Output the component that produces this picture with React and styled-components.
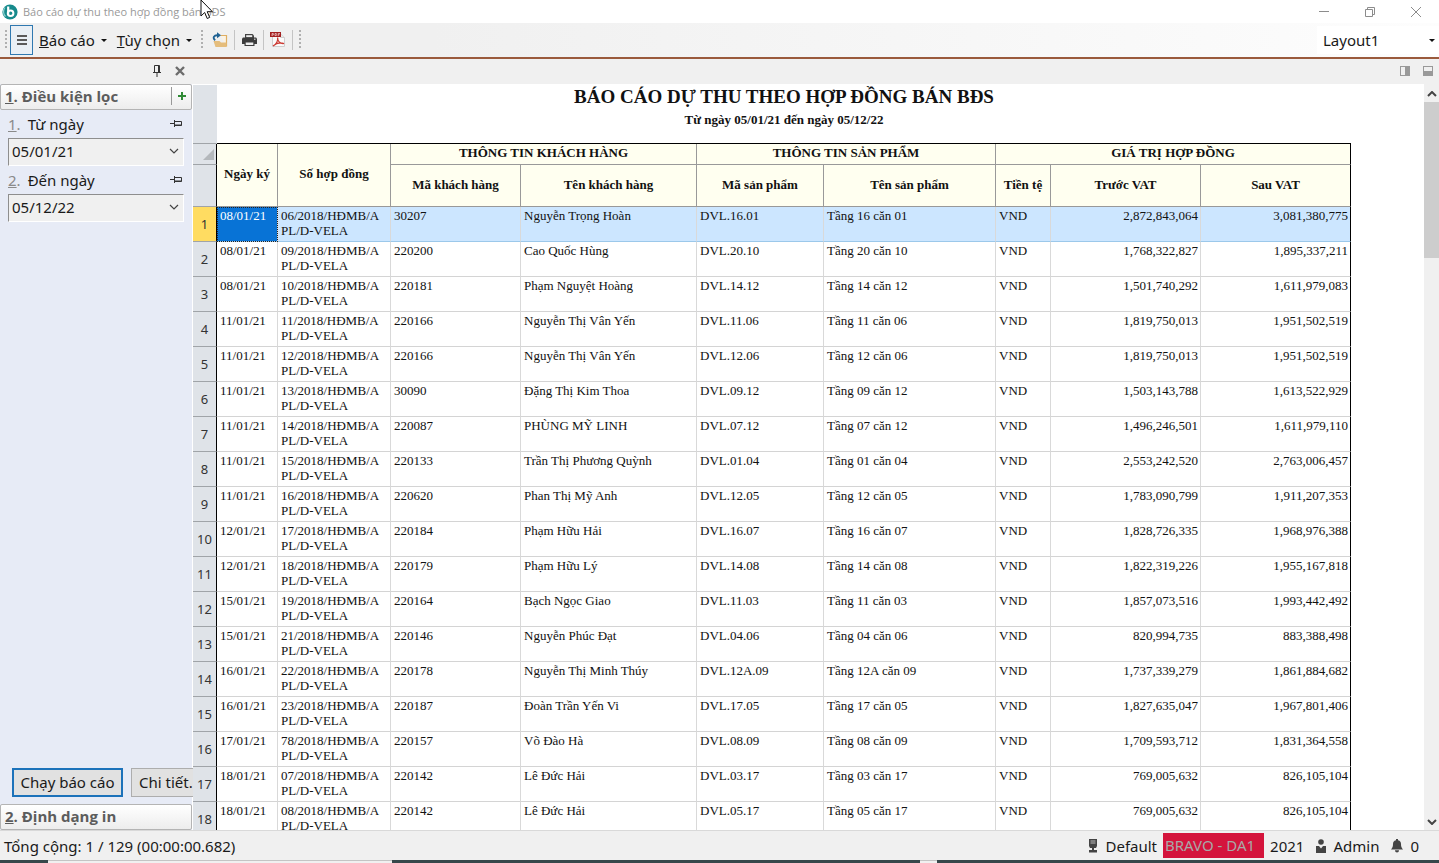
import React, { useState } from 'react';
import styled, { createGlobalStyle } from 'styled-components';

const rows = [
  ['08/01/21', '06', '30207', 'Nguyễn Trọng Hoàn', 'DVL.16.01', 'Tầng 16 căn 01', '2,872,843,064', '3,081,380,775'],
  ['08/01/21', '09', '220200', 'Cao Quốc Hùng', 'DVL.20.10', 'Tầng 20 căn 10', '1,768,322,827', '1,895,337,211'],
  ['08/01/21', '10', '220181', 'Phạm Nguyệt Hoàng', 'DVL.14.12', 'Tầng 14 căn 12', '1,501,740,292', '1,611,979,083'],
  ['11/01/21', '11', '220166', 'Nguyễn Thị Vân Yến', 'DVL.11.06', 'Tầng 11 căn 06', '1,819,750,013', '1,951,502,519'],
  ['11/01/21', '12', '220166', 'Nguyễn Thị Vân Yến', 'DVL.12.06', 'Tầng 12 căn 06', '1,819,750,013', '1,951,502,519'],
  ['11/01/21', '13', '30090', 'Đặng Thị Kim Thoa', 'DVL.09.12', 'Tầng 09 căn 12', '1,503,143,788', '1,613,522,929'],
  ['11/01/21', '14', '220087', 'PHÙNG MỸ LINH', 'DVL.07.12', 'Tầng 07 căn 12', '1,496,246,501', '1,611,979,110'],
  ['11/01/21', '15', '220133', 'Trần Thị Phương Quỳnh', 'DVL.01.04', 'Tầng 01 căn 04', '2,553,242,520', '2,763,006,457'],
  ['11/01/21', '16', '220620', 'Phan Thị Mỹ Anh', 'DVL.12.05', 'Tầng 12 căn 05', '1,783,090,799', '1,911,207,353'],
  ['12/01/21', '17', '220184', 'Phạm Hữu Hải', 'DVL.16.07', 'Tầng 16 căn 07', '1,828,726,335', '1,968,976,388'],
  ['12/01/21', '18', '220179', 'Phạm Hữu Lý', 'DVL.14.08', 'Tầng 14 căn 08', '1,822,319,226', '1,955,167,818'],
  ['15/01/21', '19', '220164', 'Bạch Ngọc Giao', 'DVL.11.03', 'Tầng 11 căn 03', '1,857,073,516', '1,993,442,492'],
  ['15/01/21', '21', '220146', 'Nguyễn Phúc Đạt', 'DVL.04.06', 'Tầng 04 căn 06', '820,994,735', '883,388,498'],
  ['16/01/21', '22', '220178', 'Nguyễn Thị Minh Thúy', 'DVL.12A.09', 'Tầng 12A căn 09', '1,737,339,279', '1,861,884,682'],
  ['16/01/21', '23', '220187', 'Đoàn Trần Yến Vi', 'DVL.17.05', 'Tầng 17 căn 05', '1,827,635,047', '1,967,801,406'],
  ['17/01/21', '78', '220157', 'Võ Đào Hà', 'DVL.08.09', 'Tầng 08 căn 09', '1,709,593,712', '1,831,364,558'],
  ['18/01/21', '07', '220142', 'Lê Đức Hải', 'DVL.03.17', 'Tầng 03 căn 17', '769,005,632', '826,105,104'],
  ['18/01/21', '08', '220142', 'Lê Đức Hải', 'DVL.05.17', 'Tầng 05 căn 17', '769,005,632', '826,105,104'],
];

const columnWidths = [24, 61, 113, 130, 176, 127, 172, 55, 150, 150];

function LogoIcon() {
  return (
    <svg width="16" height="16" viewBox="0 0 16 16">
      <circle cx="8" cy="8" r="7.6" fill="#168a8c" />
      <path d="M3 3.5C1 6 1 10 3.5 12.500" stroke="#8fd0cf" strokeWidth="1.2" fill="none" />
      <path d="M6.2 2.5v7.200" stroke="#fff" strokeWidth="2.2" fill="none" />
      <circle cx="8.6" cy="9.2" r="2.8" stroke="#fff" strokeWidth="2" fill="none" />
    </svg>
  );
}

function MinimizeIcon() {
  return (
    <svg width="12" height="12" viewBox="0 0 12 12" stroke="#8c8c8c" fill="none">
      <path d="M1 5.5h10" />
    </svg>
  );
}

function RestoreIcon() {
  return (
    <svg width="12" height="12" viewBox="0 0 12 12" stroke="#8c8c8c" fill="none">
      <path d="M1.5 3.5h7v7h-7zM3.5 3.5v-2h7v7h-2" />
    </svg>
  );
}

function CloseIcon() {
  return (
    <svg width="12" height="12" viewBox="0 0 12 12" stroke="#8c8c8c" fill="none">
      <path d="M1 1l10 10M11 1L1 11" />
    </svg>
  );
}

function MenuIcon() {
  return (
    <svg width="10" height="12" viewBox="0 0 10 12" fill="#5a5a5a">
      <path d="M0 1h10v2H0zM0 5h10v2H0zM0 9h10v2H0z" />
    </svg>
  );
}

function FolderIcon() {
  return (
    <svg width="16" height="16" viewBox="0 0 16 16">
      <path d="M8.5 3.500h6v11" stroke="#dfae62" strokeWidth="1.2" fill="#fbf3e4" />
      <path d="M1.500 9h6l1.500 1.500h5.500V15h-11z" fill="#e5bd7c" />
      <path d="M3.200 8.200C.2 6 2 2.800 6 3.300" stroke="#1f6293" strokeWidth="1.800" fill="none" />
      <path d="M5 .3l4 3-4 3z" fill="#1f6293" />
    </svg>
  );
}

function PrinterIcon() {
  return (
    <svg width="15" height="14" viewBox="0 0 15 14">
      <path d="M3 1h7.500L12 2.500V5H3z" fill="#444" />
      <path d="M4.200 2.200h6v2h-6z" fill="#eee" />
      <path d="M1 4.500h13l1 1V11H0V5.500z" fill="#3c3c3c" />
      <path d="M2.500 8.500h10V13h-10z" fill="#3c3c3c" />
      <path d="M3.700 9.500h7.600V12H3.700z" fill="#eee" />
      <path d="M12 6.200h1.500" stroke="#eee" />
    </svg>
  );
}

function PdfIcon() {
  return (
    <svg width="16" height="16" viewBox="0 0 16 16">
      <path d="M2.500 1.500h8l4 4v9h-12z" fill="#fafafa" stroke="#cfcfcf" />
      <path d="M10.500 1.500v4h4" fill="#e8e8e8" stroke="#cfcfcf" />
      <path d="M0 0h11v5H0z" fill="#a32020" />
      <path d="M2 4V1.500h1.300V3H2M5 1.500V3.600h1.300V1.500zM8.200 4V1.500H10M8.200 2.700h1.300" stroke="#f6d8d8" strokeWidth=".7" fill="none" />
      <path d="M3 14c3-1.500 5-5 4.600-8.500 0 3.500 2 6.500 6.400 6-3-1-7.500-.6-11 2.500z" stroke="#cc3b33" strokeWidth="1.200" fill="none" />
    </svg>
  );
}

function PinIcon({ sideways }) {
  return (
    <svg width="12" height="12" viewBox="0 0 12 12" stroke="#333" fill="none">
      {sideways ? (
        <path d="M0 5.500h4M4.500 2v7M4.500 3.500h7v4h-7M5 7h6.500" />
      ) : (
        <path d="M3.500 7V.5h5V7M7.500 0v7M2 7.500h8M6 8v4" />
      )}
    </svg>
  );
}

function CrossIcon() {
  return (
    <svg width="10" height="10" viewBox="0 0 10 10" stroke="#6c6c6c" strokeWidth="2.400" fill="none">
      <path d="M1 1l8 8M9 1L1 9" />
    </svg>
  );
}

function PlusIcon() {
  return (
    <svg width="8" height="8" viewBox="0 0 8 8" fill="#2f8a35">
      <path d="M3 0h2v3h3v2H5v3H3V5H0V3h3z" />
    </svg>
  );
}

function Chevron({ up, stroke = 1 }) {
  return (
    <svg width="10" height="6" viewBox="0 0 10 6" stroke="#444" strokeWidth={stroke} fill="none">
      <path d={up ? 'M1 5l4-4 4 4' : 'M1 1l4 4 4-4'} />
    </svg>
  );
}

function Caret() {
  return (
    <svg width="6" height="3" viewBox="0 0 6 3">
      <path d="M0 0h6L3 3z" fill="#111" />
    </svg>
  );
}

function ServerIcon() {
  return (
    <svg width="10" height="14" viewBox="0 0 10 14" fill="#444">
      <path d="M1 0h8v7L8 9H2L1 7z" />
      <path d="M2.500 2h5M2.500 4h5" stroke="#bbb" />
      <path d="M4 9h2v2h3v2.500H1V11h3z" />
    </svg>
  );
}

function UserIcon() {
  return (
    <svg width="10" height="14" viewBox="0 0 10 14" fill="#444">
      <circle cx="5" cy="3" r="2.800" />
      <path d="M0 7h3l2 2.500L7 7h3v7H0z" />
    </svg>
  );
}

function BellIcon() {
  return (
    <svg width="12" height="14" viewBox="0 0 12 14" fill="#444">
      <path d="M5 0h2v1.200C9.400 1.800 10 3.300 10 5c0 2.500.5 3.700 2 5.500H0C1.500 8.700 2 7.500 2 5c0-1.700.6-3.200 3-3.800z" />
      <path d="M4 11.300h4c0 3-4 3-4 0z" />
    </svg>
  );
}

export default function App() {
  const [fromDate, setFromDate] = useState('05/01/21');
  const [toDate, setToDate] = useState('05/12/22');

  return (
    <Window>
      <GlobalStyle />
      <TitleBar>
        <LogoIcon />
        <Title>Báo cáo dự thu theo hợp đồng bán BĐS</Title>
        <WindowButton aria-label="Minimize"><MinimizeIcon /></WindowButton>
        <WindowButton aria-label="Restore"><RestoreIcon /></WindowButton>
        <WindowButton aria-label="Close"><CloseIcon /></WindowButton>
      </TitleBar>

      <Toolbar>
        <Grip />
        <MenuToggle aria-label="Menu"><MenuIcon /></MenuToggle>
        <MenuButton><span><u>B</u>áo cáo</span><Caret /></MenuButton>
        <MenuButton><span><u>T</u>ùy chọn</span><Caret /></MenuButton>
        <Tools>
          <Grip />
          <ToolButton aria-label="Open"><FolderIcon /></ToolButton>
          <ToolButton aria-label="Print"><PrinterIcon /></ToolButton>
          <ToolButton aria-label="PDF"><PdfIcon /></ToolButton>
        </Tools>
        <Grip />
        <LayoutButton><span>Layout1</span><Caret /></LayoutButton>
      </Toolbar>

      <DockBar>
        <DockTools>
          <IconButton aria-label="Pin"><PinIcon /></IconButton>
          <IconButton aria-label="Close panel"><CrossIcon /></IconButton>
        </DockTools>
        <ViewTools>
          <IconButton aria-label="Right pane"><PaneIcon $side="right" /></IconButton>
          <IconButton aria-label="Bottom pane"><PaneIcon $side="bottom" /></IconButton>
        </ViewTools>
      </DockBar>

      <Main>
        <Sidebar>
          <Section>
            <SectionTitle><u>1</u>. Điều kiện lọc</SectionTitle>
            <AddButton aria-label="Add"><PlusIcon /></AddButton>
          </Section>
          <Filters>
            <FieldHead>
              <FieldLabel htmlFor="from"><u>1</u><i>.</i>Từ ngày</FieldLabel>
              <PinIcon sideways />
            </FieldHead>
            <DateField>
              <DateInput id="from" value={fromDate} onChange={(e) => setFromDate(e.target.value)} />
              <Chevron stroke={1.2} />
            </DateField>
            <FieldHead>
              <FieldLabel htmlFor="to"><u>2</u><i>.</i>Đến ngày</FieldLabel>
              <PinIcon sideways />
            </FieldHead>
            <DateField>
              <DateInput id="to" value={toDate} onChange={(e) => setToDate(e.target.value)} />
              <Chevron stroke={1.2} />
            </DateField>
          </Filters>
          <Actions>
            <RunButton>Chạy báo cáo</RunButton>
            <DetailButton>Chi tiết.</DetailButton>
          </Actions>
          <Section>
            <SectionTitle><u>2</u>. Định dạng in</SectionTitle>
          </Section>
        </Sidebar>

        <Report>
          <Grid>
            <colgroup>
              {columnWidths.map((w, i) => <Col key={i} $w={w} />)}
            </colgroup>
            <thead>
              <tr>
                <Gutter />
                <TitleCell colSpan={9}>
                  <ReportTitle>BÁO CÁO DỰ THU THEO HỢP ĐỒNG BÁN BĐS</ReportTitle>
                  <ReportRange>Từ ngày 05/01/21 đến ngày 05/12/22</ReportRange>
                </TitleCell>
              </tr>
              <GroupRow>
                <Gutter $lined>
                  <Corner width="11" height="11" viewBox="0 0 11 11"><path d="M11 0v11H0z" fill="#b4b8bc" /></Corner>
                </Gutter>
                <HeadCell rowSpan={2}>Ngày ký</HeadCell>
                <HeadCell rowSpan={2}>Số hợp đồng</HeadCell>
                <HeadCell colSpan={2}>THÔNG TIN KHÁCH HÀNG</HeadCell>
                <HeadCell colSpan={2}>THÔNG TIN SẢN PHẨM</HeadCell>
                <HeadCell colSpan={3}>GIÁ TRỊ HỢP ĐỒNG</HeadCell>
              </GroupRow>
              <HeadRow>
                <Gutter $lined />
                <HeadCell>Mã khách hàng</HeadCell>
                <HeadCell>Tên khách hàng</HeadCell>
                <HeadCell>Mã sản phẩm</HeadCell>
                <HeadCell>Tên sản phẩm</HeadCell>
                <HeadCell>Tiền tệ</HeadCell>
                <HeadCell>Trước VAT</HeadCell>
                <HeadCell>Sau VAT</HeadCell>
              </HeadRow>
            </thead>
            <tbody>
              {rows.map(([date, no, code, name, product, unit, before, after], i) => (
                <Row key={no} $selected={i === 0}>
                  <RowNumber $selected={i === 0}>{i + 1}</RowNumber>
                  <Cell $active={i === 0}>{date}</Cell>
                  <Cell>{no}/2018/HĐMB/A<br />PL/D-VELA</Cell>
                  <Cell>{code}</Cell>
                  <Cell>{name}</Cell>
                  <Cell>{product}</Cell>
                  <Cell>{unit}</Cell>
                  <Cell>VND</Cell>
                  <Cell $right>{before}</Cell>
                  <Cell $right>{after}</Cell>
                </Row>
              ))}
            </tbody>
          </Grid>
        </Report>

        <Scrollbar>
          <ScrollButton aria-label="Scroll up"><Chevron up stroke={2} /></ScrollButton>
          <ScrollTrack><ScrollThumb /></ScrollTrack>
          <ScrollButton aria-label="Scroll down"><Chevron stroke={2} /></ScrollButton>
        </Scrollbar>
      </Main>

      <StatusBar>
        <StatusText>Tổng cộng: 1 / 129 (00:00:00.682)</StatusText>
        <StatusItem><ServerIcon />Default</StatusItem>
        <Company>BRAVO - DA1</Company>
        <StatusItem>2021</StatusItem>
        <StatusItem><UserIcon />Admin</StatusItem>
        <StatusItem><BellIcon />0</StatusItem>
      </StatusBar>
      <Taskbar>
        <TaskLight $width={344} $before={48} />
        <TaskLight $width={17} $before={528} />
      </Taskbar>

      <Pointer width="14" height="20" viewBox="0 0 14 20">
        <path d="M1 0v16l3.700-3.500L7.200 18.500l2.500-1.100-2.500-5.700h5.200z" fill="#fff" stroke="#111" />
      </Pointer>
    </Window>
  );
}

const GlobalStyle = createGlobalStyle`
  * {
    box-sizing: border-box;
  }
  body {
    margin: 0;
    overflow: hidden;
    font-family: "Noto Sans", "Open Sans", sans-serif;
    font-size: 15px;
    color: #1a1a1a;
  }
  button, input {
    font: inherit;
    color: inherit;
    margin: 0;
    padding: 0;
    border: 0;
    background: none;
  }
  svg {
    flex: none;
    display: block;
  }
`;

const Window = styled.div`
  position: relative;
  display: flex;
  flex-direction: column;
  height: 100vh;
  background: #fff;
`;

const TitleBar = styled.header`
  display: flex;
  align-items: center;
  height: 23px;
  padding-left: 2px;
  flex: none;
`;

const Title = styled.span`
  flex: 1;
  padding-left: 5px;
  font-family: "Open Sans", sans-serif;
  font-size: 11px;
  line-height: 23px;
  color: #999;
`;

const WindowButton = styled.button`
  display: flex;
  align-items: center;
  justify-content: center;
  width: 46px;
  height: 20px;
`;

const Toolbar = styled.nav`
  display: flex;
  align-items: center;
  height: 36px;
  padding-left: 2px;
  flex: none;
  background: linear-gradient(90deg, #f0f0f0 30%, #fdfdfd);
  border-bottom: 2px solid #9a5a3c;
`;

const Grip = styled.span`
  width: 2px;
  height: 20px;
  margin: 0 3px;
  background: repeating-linear-gradient(#b0b0b0 0 2px, transparent 2px 4px);
`;

const MenuToggle = styled.button`
  display: flex;
  align-items: center;
  justify-content: center;
  width: 23px;
  height: 30px;
  border: 1px solid #2f78b0;
  background: #e9eff5;
`;

const MenuButton = styled.button`
  display: flex;
  align-items: center;
  gap: 6px;
  padding: 0 4px 0 6px;
`;

const Tools = styled.div`
  display: flex;
  padding: 0 3px 0 2px;
`;

const ToolButton = styled.button`
  display: flex;
  align-items: center;
  justify-content: center;
  width: 29px;
  height: 20px;
  border-right: 1px solid #c4c4c4;
`;

const LayoutButton = styled.button`
  display: flex;
  align-items: center;
  justify-content: space-between;
  width: 122px;
  height: 28px;
  margin-left: auto;
  padding: 0 4px 0 6px;
  background: #fff;
`;

const DockBar = styled.div`
  display: flex;
  justify-content: space-between;
  align-items: center;
  height: 25px;
  flex: none;
  padding-bottom: 1px;
  background: #f0f0f0;
`;

const DockTools = styled.div`
  display: flex;
  justify-content: flex-end;
  gap: 12px;
  width: 192px;
  padding-right: 7px;
`;

const ViewTools = styled.div`
  display: flex;
  gap: 13px;
  padding-right: 6px;
`;

const IconButton = styled.button`
  display: flex;
  align-items: center;
`;

const PaneIcon = styled.span`
  width: 10px;
  height: 10px;
  border: 1px solid #999;
  background: linear-gradient(${(p) => (p.$side === 'right' ? '90deg' : '180deg')}, #f0f0f0 50%, #999 50%);
`;

const Main = styled.main`
  display: flex;
  flex: 1;
  min-height: 0;
`;

const Sidebar = styled.aside`
  display: flex;
  flex-direction: column;
  width: 192px;
  flex: none;
  background: #e7ebf6;
`;

const Section = styled.div`
  display: flex;
  align-items: center;
  height: 26px;
  flex: none;
  padding-bottom: 2px;
  border: 1px solid #b4b4b4;
  border-radius: 2px;
  background: linear-gradient(#fff, #ededed);
`;

const SectionTitle = styled.h2`
  flex: 1;
  margin: 0;
  padding-left: 4px;
  font-family: "Open Sans", sans-serif;
  font-size: 15px;
  line-height: 22px;
  font-weight: 700;
  color: #5c5c5c;
`;

const AddButton = styled.button`
  display: flex;
  align-items: center;
  justify-content: center;
  width: 20px;
  height: 18px;
  border-left: 1px solid #999;
`;

const Filters = styled.div`
  flex: 1;
  padding: 0 8px;
`;

const FieldHead = styled.div`
  display: flex;
  align-items: center;
  justify-content: space-between;
  height: 28px;
  padding-right: 2px;
`;

const FieldLabel = styled.label`
  u, i {
    color: #8a8a8a;
    font-style: normal;
  }
  i {
    margin-right: 7px;
  }
`;

const DateField = styled.div`
  display: flex;
  align-items: center;
  height: 28px;
  padding: 0 4px 2px 3px;
  background: #f0f0f0;
  border: 1px solid #fff;
  border-top-color: #8e8e8e;
  border-left-color: #8e8e8e;
`;

const DateInput = styled.input`
  flex: 1;
  min-width: 0;
  outline: none;
`;

const Actions = styled.div`
  display: flex;
  gap: 8px;
  padding: 0 0 7px 12px;
`;

const ActionButton = styled.button`
  height: 29px;
  padding-bottom: 2px;
  white-space: nowrap;
  background: #e1e1e1;
`;

const RunButton = styled(ActionButton)`
  width: 111px;
  flex: none;
  border: 2px solid #1c72ba;
`;

const DetailButton = styled(ActionButton)`
  flex: 1;
  padding-left: 7px;
  text-align: left;
  border: 1px solid #adadad;
  border-right: 0;
`;

const Report = styled.section`
  flex: 1;
  min-width: 0;
  overflow: hidden;
  padding: 1px 0 0 1px;
`;

const Grid = styled.table`
  table-layout: fixed;
  width: 1158px;
  border-collapse: separate;
  border-spacing: 0;
  font-family: "Liberation Serif", serif;
  font-size: 13px;
  line-height: 15px;
  color: #111;
`;

const Col = styled.col`
  width: ${(p) => p.$w}px;
`;

const Gutter = styled.td`
  padding: 0 2px 0 0;
  background: #dfe3e8;
  border-right: 1px solid ${(p) => (p.$lined ? '#000' : '#dfe3e8')};
  border-bottom: 1px solid #a0a4a8;
`;

const Corner = styled.svg`
  margin-left: auto;
`;

const TitleCell = styled.td`
  height: 59px;
  padding: 0;
  vertical-align: top;
  text-align: center;
  border-bottom: 1px solid #000;
`;

const ReportTitle = styled.h1`
  margin: 0;
  font-size: 19px;
  line-height: 24px;
`;

const ReportRange = styled.p`
  margin: 0;
  font-weight: 700;
  line-height: 22px;
`;

const GroupRow = styled.tr`
  height: 21px;
`;

const HeadRow = styled.tr`
  height: 42px;
`;

const HeadCell = styled.th`
  padding: 0 0 3px;
  background: #fffff0;
  border-right: 1px solid #999;
  border-bottom: 1px solid #999;
  &:last-child {
    border-right-color: #000;
  }
`;

const Row = styled.tr`
  height: 35px;
  background: ${(p) => (p.$selected ? '#cce6ff' : '#fff')};
  --line: ${(p) => (p.$selected ? '#9cc8ea' : '#d4d4d4')};
`;

const RowNumber = styled.th`
  padding: 0;
  font-family: "Noto Sans", sans-serif;
  font-size: 13px;
  font-weight: 400;
  color: #333;
  background: ${(p) => (p.$selected ? '#ffdc61' : '#dfe3e8')};
  border-right: 1px solid #000;
  border-bottom: 1px solid #a0a4a8;
`;

const Cell = styled.td`
  padding: 1px 2px 3px 3px;
  vertical-align: top;
  white-space: nowrap;
  text-align: ${(p) => (p.$right ? 'right' : 'left')};
  color: ${(p) => (p.$active ? '#fff' : 'inherit')};
  background: ${(p) => (p.$active ? '#0873d6' : 'none')};
  outline: ${(p) => (p.$active ? '1px dotted #222' : 'none')};
  outline-offset: -1px;
  border-right: 1px solid #d9d9d9;
  border-bottom: 1px solid var(--line);
  &:last-child {
    border-right-color: #000;
  }
`;

const Scrollbar = styled.div`
  display: flex;
  flex-direction: column;
  width: 15px;
  padding-top: 1px;
  background: #f0f0f0;
`;

const ScrollButton = styled.button`
  display: flex;
  align-items: center;
  justify-content: center;
  height: 17px;
`;

const ScrollTrack = styled.div`
  flex: 1;
`;

const ScrollThumb = styled.div`
  height: 22%;
  background: #cdcdcd;
`;

const StatusBar = styled.footer`
  display: flex;
  align-items: center;
  height: 30px;
  flex: none;
  padding: 0 14px 0 4px;
  background: #f0f0f0;
  border-top: 1px solid #d9d9d9;
`;

const StatusText = styled.span`
  flex: 1;
`;

const StatusItem = styled.span`
  display: flex;
  align-items: center;
  gap: 7px;
  padding: 0 6px;
`;

const Company = styled.span`
  padding: 0 9px 0 2px;
  line-height: 25px;
  color: #a8a8a8;
  background: #d4143c;
`;

const Taskbar = styled.div`
  display: flex;
  height: 3px;
  flex: none;
  background: #36474a;
`;

const TaskLight = styled.span`
  width: ${(p) => p.$width}px;
  margin-left: ${(p) => p.$before}px;
  background: #f0f0f0;
  border-top: 1px solid #c4c4c4;
`;

const Pointer = styled.svg`
  position: absolute;
  left: 200px;
  top: 0;
`;
